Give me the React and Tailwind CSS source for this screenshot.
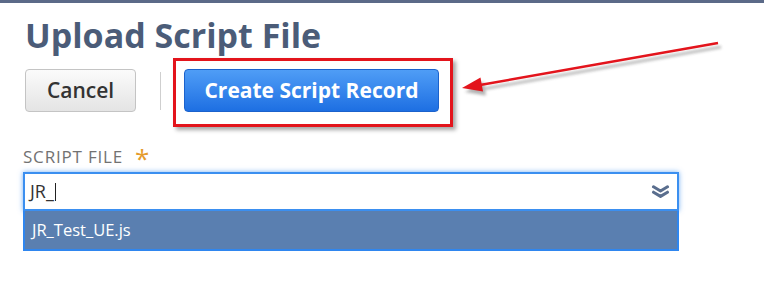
export default function App() {
  return (
    <div className="relative w-[764px] h-[297px] overflow-hidden bg-white font-['Open_Sans',sans-serif]">
      {/* top strip */}
      <div className="h-[3px] bg-[#5b6a88]" />

      {/* header + actions */}
      <div className="pl-[25px] pt-[14px]">
        <h1 className="text-[34px] leading-[36px] font-bold text-[#4b5c78]">Upload Script File</h1>
        <div className="mt-[5px] flex items-start">
          <button className="mt-[11px] w-[111px] h-[43px] rounded-[4px] border border-[#c4c4c4] bg-gradient-to-b from-[#fbfbfb] to-[#e4e4e4] text-[21px] font-semibold text-[#333] leading-none">
            Cancel
          </button>
          <div className="ml-[24px] mt-[14px] w-px h-[38px] bg-[#cfcfcf]" />
          <div className="ml-[12px] border-[3px] border-[#e3141c] pt-[8px] pl-[8px] pr-[11px] pb-[12px] shadow-[3px_3px_4px_rgba(0,0,0,0.35)]">
            <button className="w-[255px] h-[43px] rounded-[4px] border border-[#1b62cc] bg-gradient-to-b from-[#4f9df6] to-[#1d6fe2] text-[21px] font-bold text-white leading-none">
              Create Script Record
            </button>
          </div>
        </div>
      </div>

      {/* script file field */}
      <div className="pl-[23px] mt-[20px]">
        <div className="flex items-start text-[17px] leading-[20px] tracking-[0.8px] text-[#727272]">
          <span>SCRIPT FILE</span>
          <span className="ml-[12px] text-[26px] leading-[22px] text-[#e59b2d]">*</span>
        </div>
        <div className="mt-[3px] w-[656px]">
          <div className="h-[39px] flex items-center justify-between border-2 border-[#3b8ff0] shadow-[0_0_5px_rgba(59,143,240,0.7)] bg-white pl-[5px] pr-[7px]">
            <div className="flex items-center text-[18px] text-[#333]">
              <span>JR_</span>
              <span className="ml-[1px] w-px h-[18px] bg-[#222]" />
            </div>
            <svg width="19" height="13" viewBox="0 0 19 13" fill="none" stroke="#5a6e8e" strokeWidth="3" strokeLinecap="round" strokeLinejoin="round">
              <polyline points="2.5,1.8 9.5,6 16.5,1.8" />
              <polyline points="2.5,7.2 9.5,11.4 16.5,7.2" />
            </svg>
          </div>
          <div className="h-[40px] flex items-center bg-[#5a7fb0] border-2 border-t-0 border-[#2f86ef] pl-[7px] text-[16.5px] text-white">
            JR_Test_UE.js
          </div>
        </div>
      </div>

      {/* annotation arrow */}
      <svg className="absolute left-0 top-0 pointer-events-none" width="764" height="297">
        <defs>
          <filter id="blur" x="-10%" y="-50%" width="120%" height="200%">
            <feGaussianBlur stdDeviation="1.5" />
          </filter>
        </defs>
        <g filter="url(#blur)" opacity="0.45" transform="translate(3 4)">
          <line x1="718" y1="43" x2="480" y2="85" stroke="#555" strokeWidth="2.5" />
          <polygon points="462,88 483,91.5 480.5,77.5" fill="#555" />
        </g>
        <line x1="718" y1="43" x2="480" y2="85" stroke="#e3141c" strokeWidth="2.5" />
        <polygon points="462,88 483,91.5 480.5,77.5" fill="#e3141c" />
      </svg>
    </div>
  );
}
